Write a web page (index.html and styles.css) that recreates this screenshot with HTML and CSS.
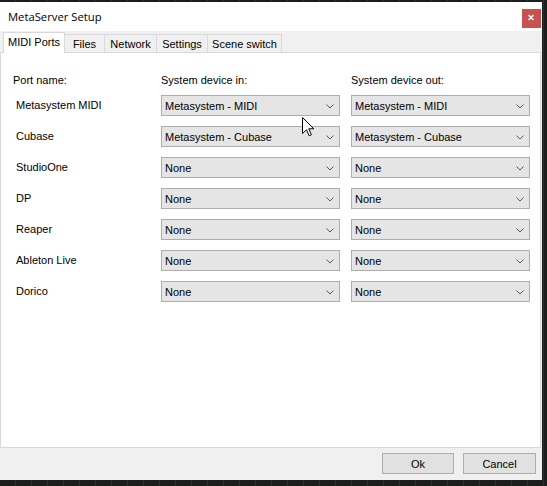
FILE: index.html
```html
<!DOCTYPE html>
<html>
<head>
<meta charset="utf-8">
<title>MetaServer Setup</title>
<link rel="stylesheet" href="styles.css">
</head>
<body>
<div class="dialog">
  <div class="titlebar">
    <span class="title">MetaServer Setup</span>
    <button class="close" aria-label="Close">
      <svg width="19" height="19" viewBox="0 0 19 19"><path d="M7 6.5 L11 10.5 M11 6.5 L7 10.5" stroke="#fff" stroke-width="1.6" stroke-linecap="round"/></svg>
    </button>
  </div>
  <div class="tabs">
    <div class="tab active w-midi">MIDI Ports</div>
    <div class="tab w-files">Files</div>
    <div class="tab w-network">Network</div>
    <div class="tab w-settings">Settings</div>
    <div class="tab w-scene">Scene switch</div>
  </div>
  <div class="panel">
    <div class="grid head">
      <span>Port name:</span>
      <span>System device in:</span>
      <span>System device out:</span>
    </div>
    <div class="grid rows">
      <span class="name">Metasystem MIDI</span>
      <div class="combo"><span>Metasystem - MIDI</span><svg class="chev" width="8" height="5" viewBox="0 0 8 5"><path d="M0.5 0.5 L4 4 L7.5 0.5" fill="none" stroke="#5a5a5a" stroke-width="1"/></svg></div>
      <div class="combo"><span>Metasystem - MIDI</span><svg class="chev" width="8" height="5" viewBox="0 0 8 5"><path d="M0.5 0.5 L4 4 L7.5 0.5" fill="none" stroke="#5a5a5a" stroke-width="1"/></svg></div>

      <span class="name">Cubase</span>
      <div class="combo"><span>Metasystem - Cubase</span><svg class="chev" width="8" height="5" viewBox="0 0 8 5"><path d="M0.5 0.5 L4 4 L7.5 0.5" fill="none" stroke="#5a5a5a" stroke-width="1"/></svg></div>
      <div class="combo"><span>Metasystem - Cubase</span><svg class="chev" width="8" height="5" viewBox="0 0 8 5"><path d="M0.5 0.5 L4 4 L7.5 0.5" fill="none" stroke="#5a5a5a" stroke-width="1"/></svg></div>

      <span class="name">StudioOne</span>
      <div class="combo"><span>None</span><svg class="chev" width="8" height="5" viewBox="0 0 8 5"><path d="M0.5 0.5 L4 4 L7.5 0.5" fill="none" stroke="#5a5a5a" stroke-width="1"/></svg></div>
      <div class="combo"><span>None</span><svg class="chev" width="8" height="5" viewBox="0 0 8 5"><path d="M0.5 0.5 L4 4 L7.5 0.5" fill="none" stroke="#5a5a5a" stroke-width="1"/></svg></div>

      <span class="name">DP</span>
      <div class="combo"><span>None</span><svg class="chev" width="8" height="5" viewBox="0 0 8 5"><path d="M0.5 0.5 L4 4 L7.5 0.5" fill="none" stroke="#5a5a5a" stroke-width="1"/></svg></div>
      <div class="combo"><span>None</span><svg class="chev" width="8" height="5" viewBox="0 0 8 5"><path d="M0.5 0.5 L4 4 L7.5 0.5" fill="none" stroke="#5a5a5a" stroke-width="1"/></svg></div>

      <span class="name">Reaper</span>
      <div class="combo"><span>None</span><svg class="chev" width="8" height="5" viewBox="0 0 8 5"><path d="M0.5 0.5 L4 4 L7.5 0.5" fill="none" stroke="#5a5a5a" stroke-width="1"/></svg></div>
      <div class="combo"><span>None</span><svg class="chev" width="8" height="5" viewBox="0 0 8 5"><path d="M0.5 0.5 L4 4 L7.5 0.5" fill="none" stroke="#5a5a5a" stroke-width="1"/></svg></div>

      <span class="name">Ableton Live</span>
      <div class="combo"><span>None</span><svg class="chev" width="8" height="5" viewBox="0 0 8 5"><path d="M0.5 0.5 L4 4 L7.5 0.5" fill="none" stroke="#5a5a5a" stroke-width="1"/></svg></div>
      <div class="combo"><span>None</span><svg class="chev" width="8" height="5" viewBox="0 0 8 5"><path d="M0.5 0.5 L4 4 L7.5 0.5" fill="none" stroke="#5a5a5a" stroke-width="1"/></svg></div>

      <span class="name">Dorico</span>
      <div class="combo"><span>None</span><svg class="chev" width="8" height="5" viewBox="0 0 8 5"><path d="M0.5 0.5 L4 4 L7.5 0.5" fill="none" stroke="#5a5a5a" stroke-width="1"/></svg></div>
      <div class="combo"><span>None</span><svg class="chev" width="8" height="5" viewBox="0 0 8 5"><path d="M0.5 0.5 L4 4 L7.5 0.5" fill="none" stroke="#5a5a5a" stroke-width="1"/></svg></div>
    </div>
  </div>
  <div class="footer">
    <button class="btn btn-ok">Ok</button>
    <button class="btn btn-cancel">Cancel</button>
  </div>
</div>
<svg class="cursor" width="13" height="20" viewBox="0 0 13 20"><path d="M0.5 0.5 V16.5 L4.5 12.8 L7.2 18.8 L9.4 17.8 L6.8 11.8 H11.8 Z" fill="#fff" stroke="#000" stroke-width="1" stroke-linejoin="miter"/></svg>
</body>
</html>
```

FILE: styles.css
```css
* { box-sizing: border-box; }
html, body { margin: 0; padding: 0; }
body {
  width: 547px;
  height: 486px;
  overflow: hidden;
  position: relative;
  background-color: #1d1d1d;
  background-image: repeating-linear-gradient(90deg, transparent 0 15px, #2e2e2e 15px 16px);
  font-family: "Liberation Sans", Arial, sans-serif;
  font-size: 11px;
  color: #000;
}
.dialog {
  margin-top: 2px;
  width: 542px;
  height: 478px;
  background: #f0f0f0;
  display: flex;
  flex-direction: column;
}
.titlebar {
  height: 29px;
  flex: none;
  background: #fff;
  display: flex;
  align-items: flex-start;
  justify-content: space-between;
}
.title {
  font-family: "Open Sans", "Liberation Sans", sans-serif;
  font-size: 11.25px;
  line-height: 29px;
  padding-left: 8px;
  color: #000;
}
.close {
  margin-top: 7px;
  margin-right: 1px;
  width: 19px;
  height: 19px;
  padding: 0;
  border: 0;
  background: #c75050;
  display: flex;
  align-items: center;
  justify-content: center;
}
.tabs {
  height: 22px;
  flex: none;
  display: flex;
  align-items: flex-end;
  padding-left: 3px;
  border-bottom: 1px solid #d9d9d9;
}
.tab {
  height: 18px;
  background: #f0f0f0;
  border-top: 1px solid #d9d9d9;
  border-right: 1px solid #d9d9d9;
  display: flex;
  align-items: center;
  justify-content: center;
  white-space: nowrap;
}
.tab.active {
  height: 21px;
  margin-bottom: -1px;
  padding-bottom: 2px;
  background: #fff;
  border-left: 1px solid #d9d9d9;
}
.w-midi { width: 62px; }
.w-files { width: 40px; }
.w-network { width: 52px; }
.w-settings { width: 51px; }
.w-scene { width: 74px; }
.panel {
  height: 395px;
  flex: none;
  margin-right: 1px;
  background: #fff;
  border: 1px solid #d9d9d9;
  border-top: 0;
  padding: 20px 0 0 12px;
}
.grid {
  display: grid;
  grid-template-columns: 137px 179px 179px;
  column-gap: 11px;
}
.head {
  height: 14px;
  line-height: 14px;
  margin-bottom: 8px;
}
.rows {
  grid-auto-rows: 21px;
  row-gap: 10px;
}
.name {
  padding-left: 3px;
  line-height: 21px;
}
.combo {
  height: 21px;
  background: #e5e5e5;
  border: 1px solid #adadad;
  display: flex;
  align-items: center;
  justify-content: space-between;
  padding: 0 5px 0 3px;
  white-space: nowrap;
}
.chev { display: block; margin-top: 1px; }
.footer {
  flex: 1;
  display: flex;
  justify-content: flex-end;
  align-items: flex-start;
  padding: 5px 6px 0 0;
  gap: 9px;
}
.btn {
  height: 21px;
  padding: 0;
  background: #e1e1e1;
  border: 1px solid #adadad;
  font-family: "Liberation Sans", Arial, sans-serif;
  font-size: 11px;
  color: #000;
}
.btn-ok { width: 72px; }
.btn-cancel { width: 73px; }
.cursor {
  position: absolute;
  left: 302px;
  top: 117px;
}
```
